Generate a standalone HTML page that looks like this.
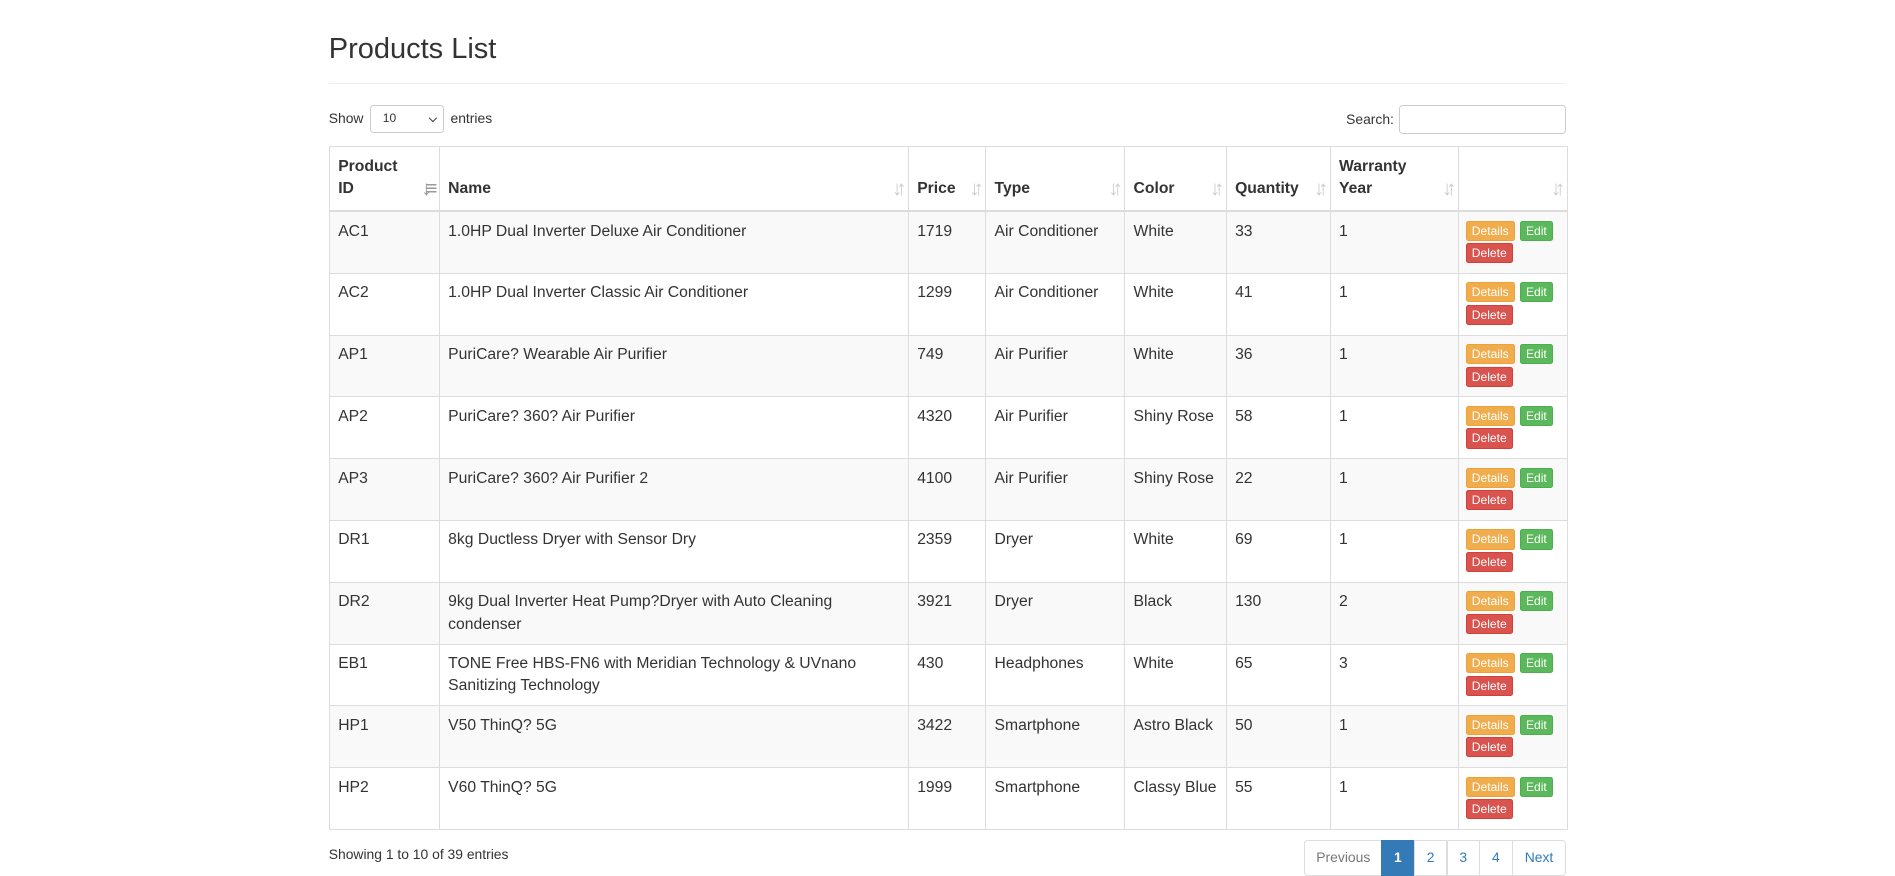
<!DOCTYPE html>
<html><head><meta charset="utf-8"><style>
html,body{margin:0;padding:0;background:#fff;}
body{zoom:1.2086;width:1568px;height:722px;overflow:hidden;font-family:"Liberation Sans",Arial,sans-serif;color:#333;font-size:13px;position:relative;}
.c{position:absolute;left:272px;width:1024px;top:0;}
h1{font-weight:400;font-size:24px;margin:0;position:absolute;top:27px;left:0;line-height:28px;color:#333;}
.hr{position:absolute;top:69px;left:0;width:1024px;border-top:1px solid #eee;}
.show{position:absolute;top:87px;left:0;font-size:11.5px;line-height:23px;}
.sel{display:inline-block;vertical-align:top;width:60px;height:21px;border:1px solid #ccc;border-radius:3px;margin:0 2px;position:relative;font-size:10px;text-indent:10px;line-height:21px;}
.sel:after{content:"";position:absolute;right:6px;top:7px;width:4px;height:4px;border-right:1.5px solid #333;border-bottom:1.5px solid #333;transform:rotate(45deg);}
.search{position:absolute;top:87px;right:0;font-size:11.5px;line-height:24px;}
.search span{display:inline-block;vertical-align:top;width:137px;height:22px;border:1px solid #ccc;border-radius:3px;margin-left:4px;}
table{position:absolute;top:121px;left:0;width:1025px;border-collapse:collapse;table-layout:fixed;}
th,td{border:1px solid #ddd;padding:7px 7px;vertical-align:top;line-height:18.5px;text-align:left;white-space:nowrap;}
th{font-weight:bold;vertical-align:bottom;height:35px;position:relative;border-bottom:2px solid #ddd;padding-bottom:8px;}
td{height:37.3px;padding:7px 7px 6px;}
tr.o td{background:#f9f9f9;}
.si{position:absolute;right:6px;bottom:9px;color:#ccc;font-size:17px;letter-spacing:-5px;font-weight:bold;line-height:17px;}
.b{display:inline-block;color:#fff;font-size:10px;line-height:15px;padding:0 4px;border-radius:2px;margin:0 0 2px 0;}
.d{background:#f0ad4e;border:1px solid #eea236;}
.e{background:#5cb85c;border:1px solid #4cae4c;margin-left:1px;}
.x{background:#d9534f;border:1px solid #d43f3a;}
td.act{padding:7px 6px 5px;line-height:14px;}
.foot{position:absolute;top:700px;left:0;font-size:11.5px;}
.pg{position:absolute;top:695px;right:0;display:flex;font-size:11.5px;}
.pg span{border:1px solid #ddd;margin-left:-1px;height:28px;line-height:28px;padding:0 10px;color:#337ab7;}
.pg span:first-child{border-radius:3px 0 0 3px;color:#777;padding:0 9px;}
.pg span:last-child{border-radius:0 3px 3px 0;}
.pg .a{background:#337ab7;color:#fff;border-color:#337ab7;font-weight:bold;padding:0 10px;}
</style></head><body><div class="c">
<h1>Products List</h1><div class="hr"></div>
<div class="show">Show <span class="sel">10</span> entries</div>
<div class="search">Search:<span></span></div>
<table>
<colgroup><col style="width:91px"><col style="width:388px"><col style="width:64px"><col style="width:115px"><col style="width:84px"><col style="width:86px"><col style="width:106px"><col style="width:90px"></colgroup>
<tr><th>Product<br>ID<span class="si" style="color:#999">↓≡</span></th><th>Name<span class="si">↓↑</span></th><th>Price<span class="si">↓↑</span></th><th>Type<span class="si">↓↑</span></th><th>Color<span class="si">↓↑</span></th><th>Quantity<span class="si">↓↑</span></th><th>Warranty<br>Year<span class="si">↓↑</span></th><th><span class="si">↓↑</span></th></tr>
<tr class="o"><td>AC1</td><td>1.0HP Dual Inverter Deluxe Air Conditioner</td><td>1719</td><td>Air Conditioner</td><td>White</td><td>33</td><td>1</td><td class="act"><span class="b d">Details</span> <span class="b e">Edit</span><br><span class="b x">Delete</span></td></tr>
<tr><td>AC2</td><td>1.0HP Dual Inverter Classic Air Conditioner</td><td>1299</td><td>Air Conditioner</td><td>White</td><td>41</td><td>1</td><td class="act"><span class="b d">Details</span> <span class="b e">Edit</span><br><span class="b x">Delete</span></td></tr>
<tr class="o"><td>AP1</td><td>PuriCare? Wearable Air Purifier</td><td>749</td><td>Air Purifier</td><td>White</td><td>36</td><td>1</td><td class="act"><span class="b d">Details</span> <span class="b e">Edit</span><br><span class="b x">Delete</span></td></tr>
<tr><td>AP2</td><td>PuriCare? 360? Air Purifier</td><td>4320</td><td>Air Purifier</td><td>Shiny Rose</td><td>58</td><td>1</td><td class="act"><span class="b d">Details</span> <span class="b e">Edit</span><br><span class="b x">Delete</span></td></tr>
<tr class="o"><td>AP3</td><td>PuriCare? 360? Air Purifier 2</td><td>4100</td><td>Air Purifier</td><td>Shiny Rose</td><td>22</td><td>1</td><td class="act"><span class="b d">Details</span> <span class="b e">Edit</span><br><span class="b x">Delete</span></td></tr>
<tr><td>DR1</td><td>8kg Ductless Dryer with Sensor Dry</td><td>2359</td><td>Dryer</td><td>White</td><td>69</td><td>1</td><td class="act"><span class="b d">Details</span> <span class="b e">Edit</span><br><span class="b x">Delete</span></td></tr>
<tr class="o"><td>DR2</td><td>9kg Dual Inverter Heat Pump?Dryer with Auto Cleaning<br>condenser</td><td>3921</td><td>Dryer</td><td>Black</td><td>130</td><td>2</td><td class="act"><span class="b d">Details</span> <span class="b e">Edit</span><br><span class="b x">Delete</span></td></tr>
<tr><td>EB1</td><td>TONE Free HBS-FN6 with Meridian Technology &amp; UVnano<br>Sanitizing Technology</td><td>430</td><td>Headphones</td><td>White</td><td>65</td><td>3</td><td class="act"><span class="b d">Details</span> <span class="b e">Edit</span><br><span class="b x">Delete</span></td></tr>
<tr class="o"><td>HP1</td><td>V50 ThinQ? 5G</td><td>3422</td><td>Smartphone</td><td>Astro Black</td><td>50</td><td>1</td><td class="act"><span class="b d">Details</span> <span class="b e">Edit</span><br><span class="b x">Delete</span></td></tr>
<tr><td>HP2</td><td>V60 ThinQ? 5G</td><td>1999</td><td>Smartphone</td><td>Classy Blue</td><td>55</td><td>1</td><td class="act"><span class="b d">Details</span> <span class="b e">Edit</span><br><span class="b x">Delete</span></td></tr>
</table>
<div class="foot">Showing 1 to 10 of 39 entries</div>
<div class="pg"><span>Previous</span><span class="a">1</span><span>2</span><span>3</span><span>4</span><span>Next</span></div>
</div></body></html>
